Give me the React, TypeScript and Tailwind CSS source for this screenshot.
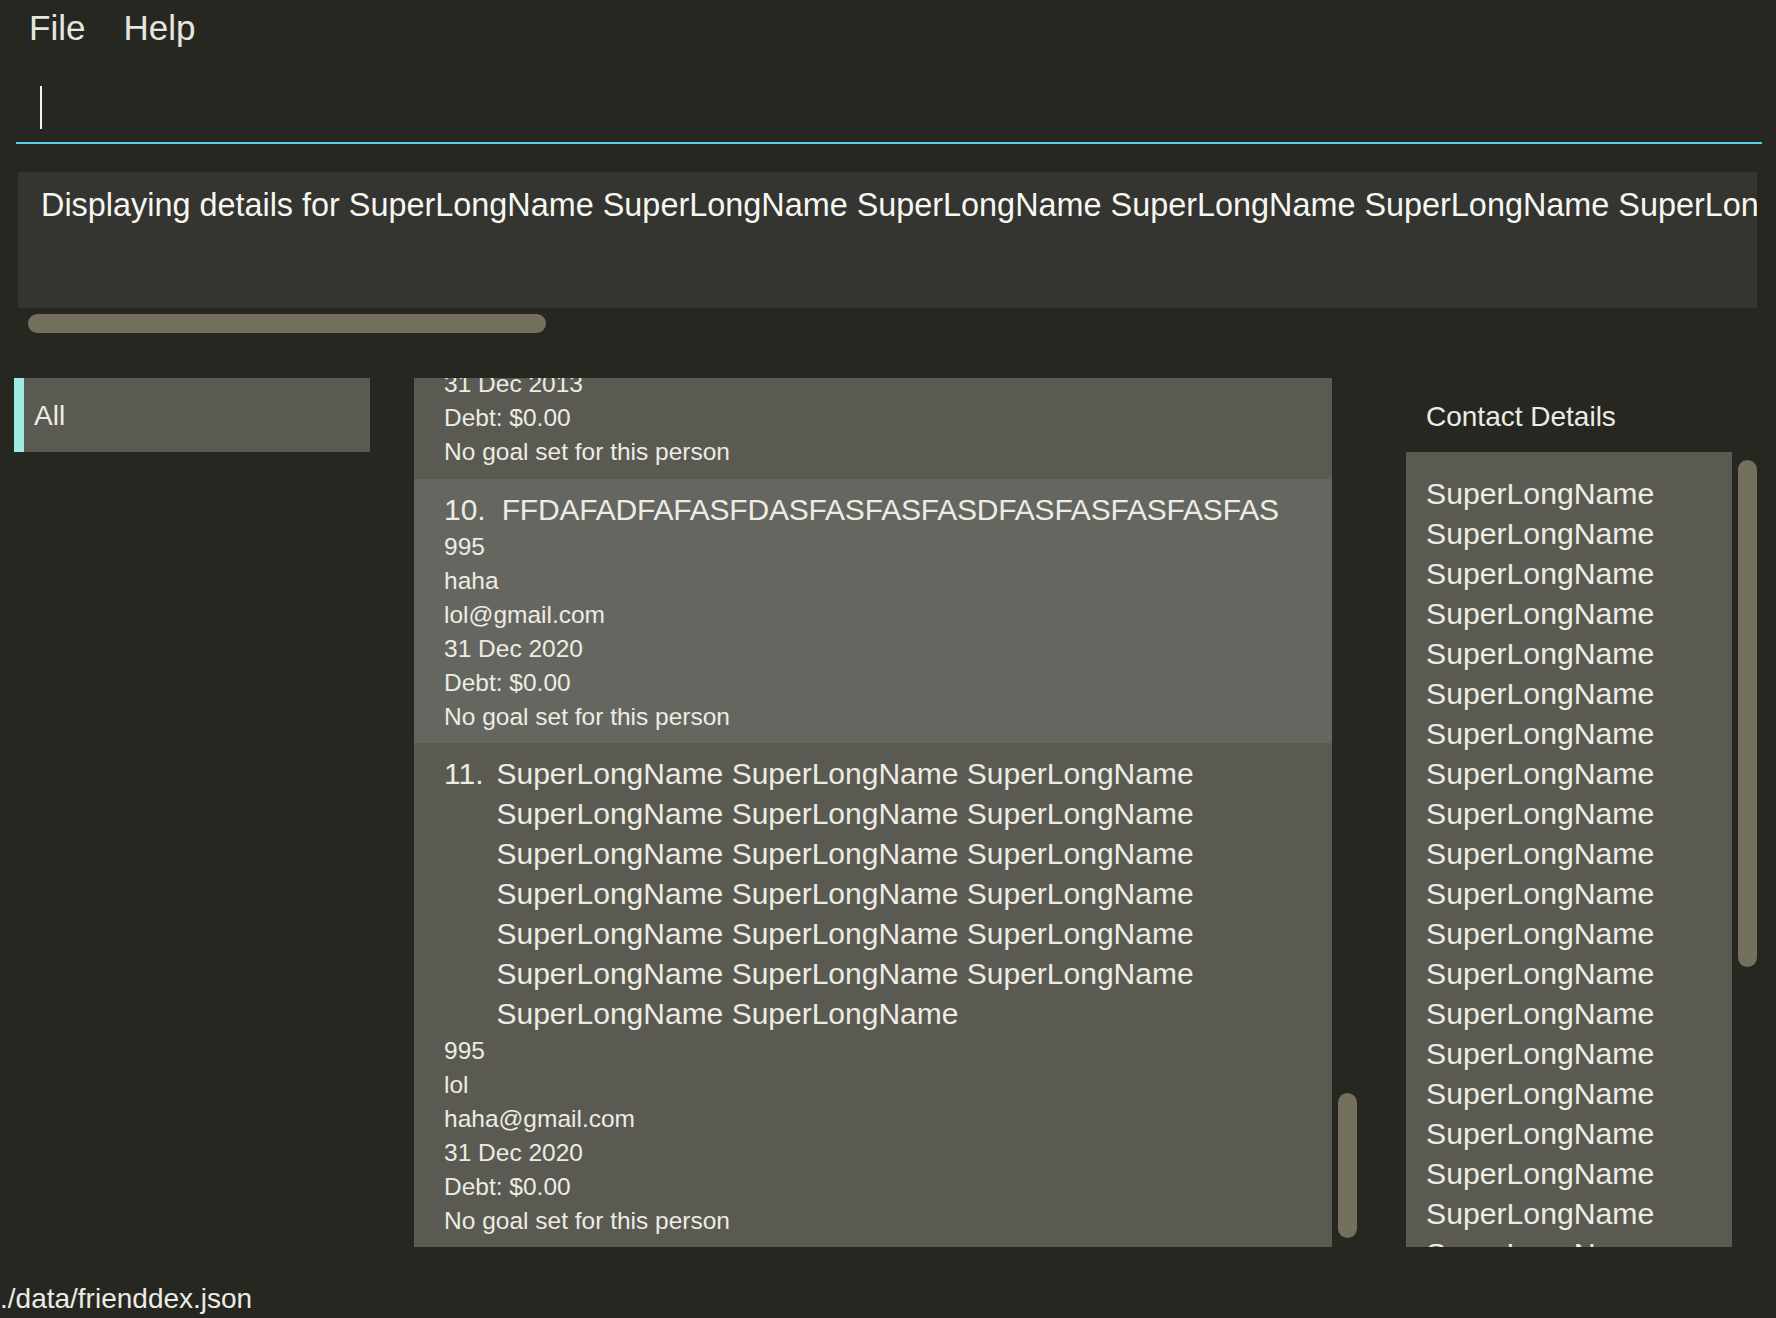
import React from "react";

const Detail = ({ children }: { children: React.ReactNode }) => (
  <div className="text-[24.5px] leading-[34px] whitespace-nowrap">{children}</div>
);

export default function App() {
  const names = Array.from({ length: 20 }, (_, i) => i);
  const longName = Array.from({ length: 20 }, () => "SuperLongName").join(" ");
  const card11Name = Array.from({ length: 20 }, () => "SuperLongName").join(" ");
  return (
    <div className="w-[1776px] h-[1318px] bg-[#272722] flex flex-col overflow-hidden text-[#ecece4] font-['Liberation_Sans',Arial,sans-serif]">
      {/* Menu bar */}
      <div className="h-[56px] flex items-start pt-[10px] pl-[29px] gap-[38px] text-[35px] leading-[35px] text-[#e6e6e0]">
        <span>File</span>
        <span>Help</span>
      </div>

      {/* Command box */}
      <div className="ml-[16px] mr-[14px] h-[88px] border-b-2 border-[#56d3e6] pt-[30px] pl-[24px]">
        <div className="w-[2px] h-[43px] bg-[#f2f2f2]" />
      </div>

      {/* Result display */}
      <div className="mt-[28px] ml-[18px] mr-[19px] h-[136px] bg-[#343430] overflow-hidden whitespace-nowrap pl-[23px] pt-[13px] text-[32.4px] leading-[40px] text-[#f7f7f2]">
        Displaying details for {longName}
      </div>

      {/* Horizontal scrollbar */}
      <div className="mt-[6px] ml-[28px] w-[518px] h-[19px] rounded-full bg-[#756f5e]" />

      {/* Main */}
      <div className="mt-[45px] h-[869px] flex flex-row">
        {/* Left */}
        <div className="ml-[14px] w-[356px] flex flex-col">
          <div className="h-[74px] bg-[#5a5a52] border-l-[10px] border-[#9fece2] flex items-center pl-[10px] pt-[2px] text-[28px] leading-[28px]">
            All
          </div>
        </div>

        {/* List */}
        <div className="ml-[44px] w-[918px] overflow-hidden flex flex-col">
          <div className="bg-[#5a5a52] pl-[30px] pb-[10px]">
            <div className="mt-[-11px]">
              <Detail>31 Dec 2013</Detail>
              <Detail>Debt: $0.00</Detail>
              <Detail>No goal set for this person</Detail>
            </div>
          </div>

          <div className="bg-[#666660] pl-[30px] pr-[30px] pt-[11px] pb-[9px]">
            <div className="flex items-start text-[30px] leading-[40px]">
              <span className="pr-[16px] shrink-0">10.</span>
              <span className="flex-1 tracking-[-0.2px] whitespace-nowrap">FFDAFADFAFASFDASFASFASFASDFASFASFASFASFAS</span>
            </div>
            <Detail>995</Detail>
            <Detail>haha</Detail>
            <Detail>lol@gmail.com</Detail>
            <Detail>31 Dec 2020</Detail>
            <Detail>Debt: $0.00</Detail>
            <Detail>No goal set for this person</Detail>
          </div>

          <div className="bg-[#5a5a52] pl-[30px] pr-[30px] pt-[11px] pb-[9px]">
            <div className="flex items-start text-[30px] leading-[40px]">
              <span className="pr-[13px] shrink-0">11.</span>
              <span className="flex-1">{card11Name}</span>
            </div>
            <Detail>995</Detail>
            <Detail>lol</Detail>
            <Detail>haha@gmail.com</Detail>
            <Detail>31 Dec 2020</Detail>
            <Detail>Debt: $0.00</Detail>
            <Detail>No goal set for this person</Detail>
          </div>
        </div>

        {/* List scrollbar */}
        <div className="ml-[6px] w-[19px] flex flex-col">
          <div className="mt-[715px] h-[145px] rounded-full bg-[#756f5e]" />
        </div>

        {/* Right */}
        <div className="ml-[49px] w-[326px] flex flex-col">
          <div className="h-[74px] pt-[25px] pl-[20px] text-[28px] leading-[28px] whitespace-nowrap">
            Contact Details
          </div>
          <div className="flex-1 bg-[#5a5a52] overflow-hidden pt-[22px] pl-[20px]">
            {names.map((i) => (
              <div key={i} className="text-[30.2px] leading-[40px] whitespace-nowrap">
                SuperLongName
              </div>
            ))}
          </div>
        </div>

        {/* Right scrollbar */}
        <div className="ml-[6px] w-[19px] flex flex-col">
          <div className="mt-[82px] h-[507px] rounded-full bg-[#756f5e]" />
        </div>
      </div>

      {/* Status bar */}
      <div className="flex-1 pt-[38px] pl-[0px] text-[28px] leading-[28px] whitespace-nowrap">
        ./data/frienddex.json
      </div>
    </div>
  );
}
